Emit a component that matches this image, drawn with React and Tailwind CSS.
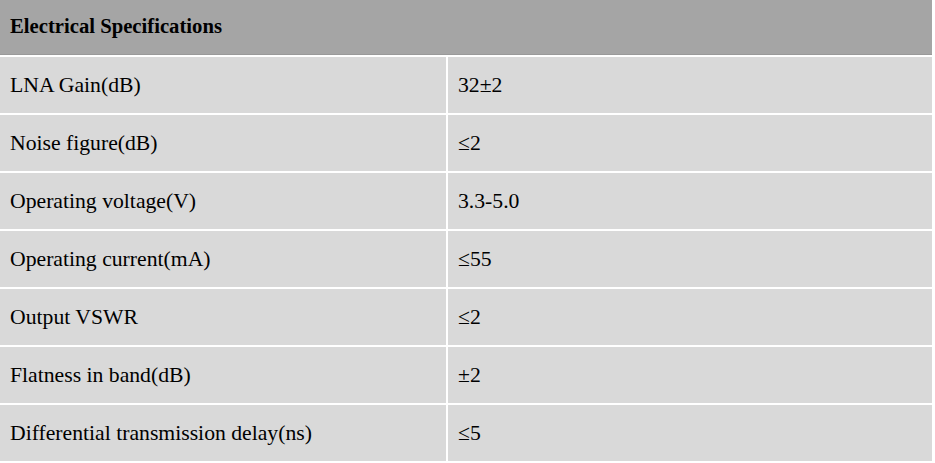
import React from "react";

const rows = [
  ["LNA Gain(dB)", "32±2"],
  ["Noise figure(dB)", "≤2"],
  ["Operating voltage(V)", "3.3-5.0"],
  ["Operating current(mA)", "≤55"],
  ["Output VSWR", "≤2"],
  ["Flatness in band(dB)", "±2"],
  ["Differential transmission delay(ns)", "≤5"],
];

export default function App() {
  return (
    <div className="w-[935px] h-[463px] bg-white pr-[3px] text-black" style={{ fontFamily: '"Liberation Serif", "Times New Roman", serif' }}>
      <div className="h-[55px] bg-[#a5a5a5] border-b border-[#999999] flex items-center px-[10px] text-[20.7px] font-bold">
        Electrical Specifications
      </div>
      <div className="flex flex-col gap-[2px] pt-[2px]">
        {rows.map(([label, value]) => (
          <div key={label} className="flex gap-[2px] h-[56px] text-[21.7px]">
            <div className="w-[446px] bg-[#d9d9d9] flex items-center px-[10px]">{label}</div>
            <div className="flex-1 bg-[#d9d9d9] flex items-center px-[10px]">{value}</div>
          </div>
        ))}
      </div>
    </div>
  );
}
